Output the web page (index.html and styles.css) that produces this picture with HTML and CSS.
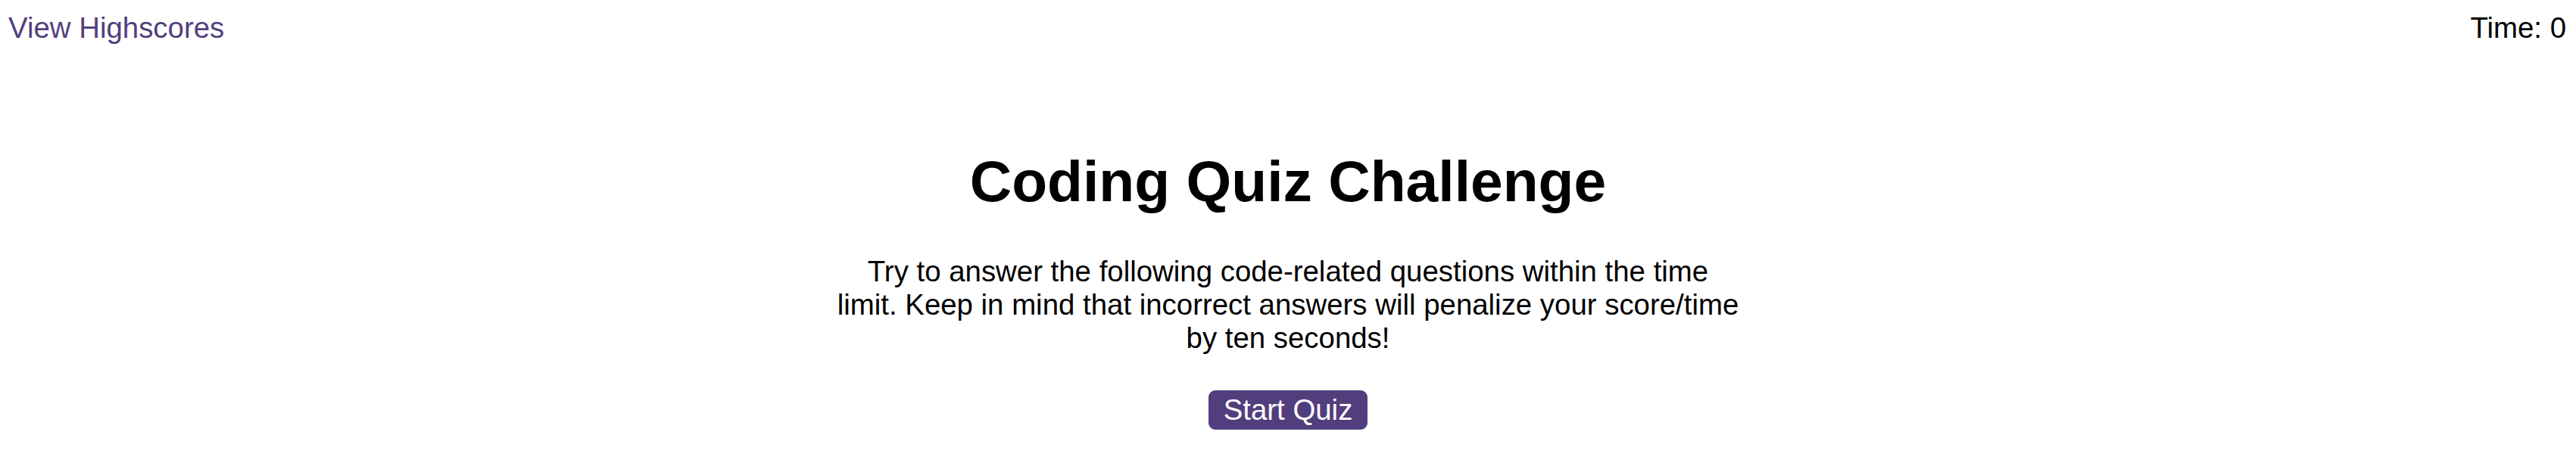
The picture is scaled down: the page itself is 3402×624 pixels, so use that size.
FILE: index.html
```html
<!DOCTYPE html>
<html lang="en">
<head>
<meta charset="utf-8">
<title>Coding Quiz Challenge</title>
<link rel="stylesheet" href="styles.css">
</head>
<body>
<header class="topbar">
  <a class="highscores" href="#">View Highscores</a>
  <div class="timer">Time: <span>0</span></div>
</header>
<main class="intro">
  <h1 class="title">Coding Quiz Challenge</h1>
  <p class="desc">Try to answer the following code-related questions within the time limit. Keep in mind that incorrect answers will penalize your score/time by ten seconds!</p>
  <button class="start" type="button">Start Quiz</button>
</main>
</body>
</html>
```
FILE: styles.css
```css
html, body {
  margin: 0;
  padding: 0;
  background: #ffffff;
}
body {
  font-family: "Liberation Sans", Arial, Helvetica, sans-serif;
  font-size: 38.4px;
  color: #000000;
}
.topbar {
  display: flex;
  justify-content: space-between;
  align-items: flex-start;
  padding: 15px 13px 0 11px;
}
.highscores {
  color: #533f7d;
  text-decoration: none;
}
.intro {
  display: flex;
  flex-direction: column;
  align-items: center;
  margin-top: 136px;
}
.title {
  margin: 0;
  font-size: 76.8px;
  font-weight: bold;
}
.desc {
  margin: 53px 0 0;
  width: 1196px;
  text-align: center;
}
.start {
  margin-top: 47px;
  font-family: inherit;
  font-size: 38.4px;
  color: #ffffff;
  background: #523e7c;
  border: none;
  border-radius: 9px;
  padding: 4px 20px;
  line-height: normal;
}
```
